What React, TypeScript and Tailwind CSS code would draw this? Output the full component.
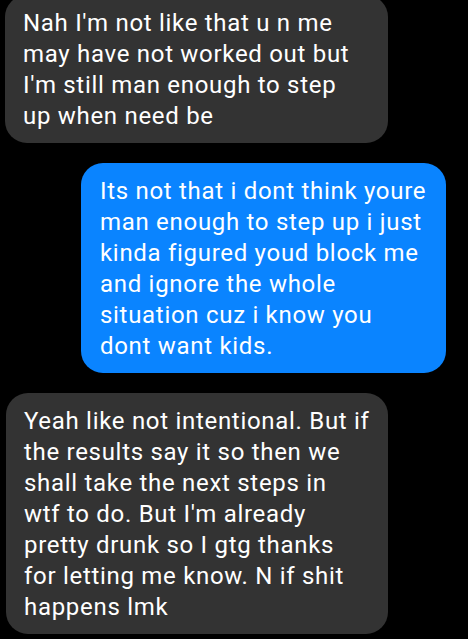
import React from 'react';

const incoming = [
  ["Nah I'm not like that u n me", 'may have not worked out but', "I'm still man enough to step", 'up when need be'],
];

function Bubble({ lines, mine, className }: { lines: string[]; mine?: boolean; className?: string }) {
  return (
    <div
      className={`${mine ? 'bg-[#0a84ff]' : 'bg-[#333333]'} rounded-[22px] pl-[18px] pr-3 pt-[13px] pb-[11px] text-white text-[24px] leading-[31px] tracking-[0.7px] ${className || ''}`}
    >
      {lines.map((l, i) => (
        <div key={i} className="whitespace-nowrap">{l}</div>
      ))}
    </div>
  );
}

export default function App() {
  return (
    <div className="w-[468px] h-[639px] bg-black overflow-hidden font-['Roboto',sans-serif]">
      <div className="flex flex-col gap-5">
        <Bubble lines={incoming[0]} className="ml-[5px] w-[383px] -mt-[5px]" />
        <Bubble
          mine
          className="ml-[81px] w-[365px] pl-[19px]"
          lines={[
            'Its not that i dont think youre',
            'man enough to step up i just',
            'kinda figured youd block me',
            'and ignore the whole',
            'situation cuz i know you',
            'dont want kids.',
          ]}
        />
        <Bubble
          className="ml-[6px] w-[382px]"
          lines={[
            'Yeah like not intentional. But if',
            'the results say it so then we',
            'shall take the next steps in',
            "wtf to do. But I'm already",
            'pretty drunk so I gtg thanks',
            'for letting me know. N if shit',
            'happens lmk',
          ]}
        />
      </div>
    </div>
  );
}
